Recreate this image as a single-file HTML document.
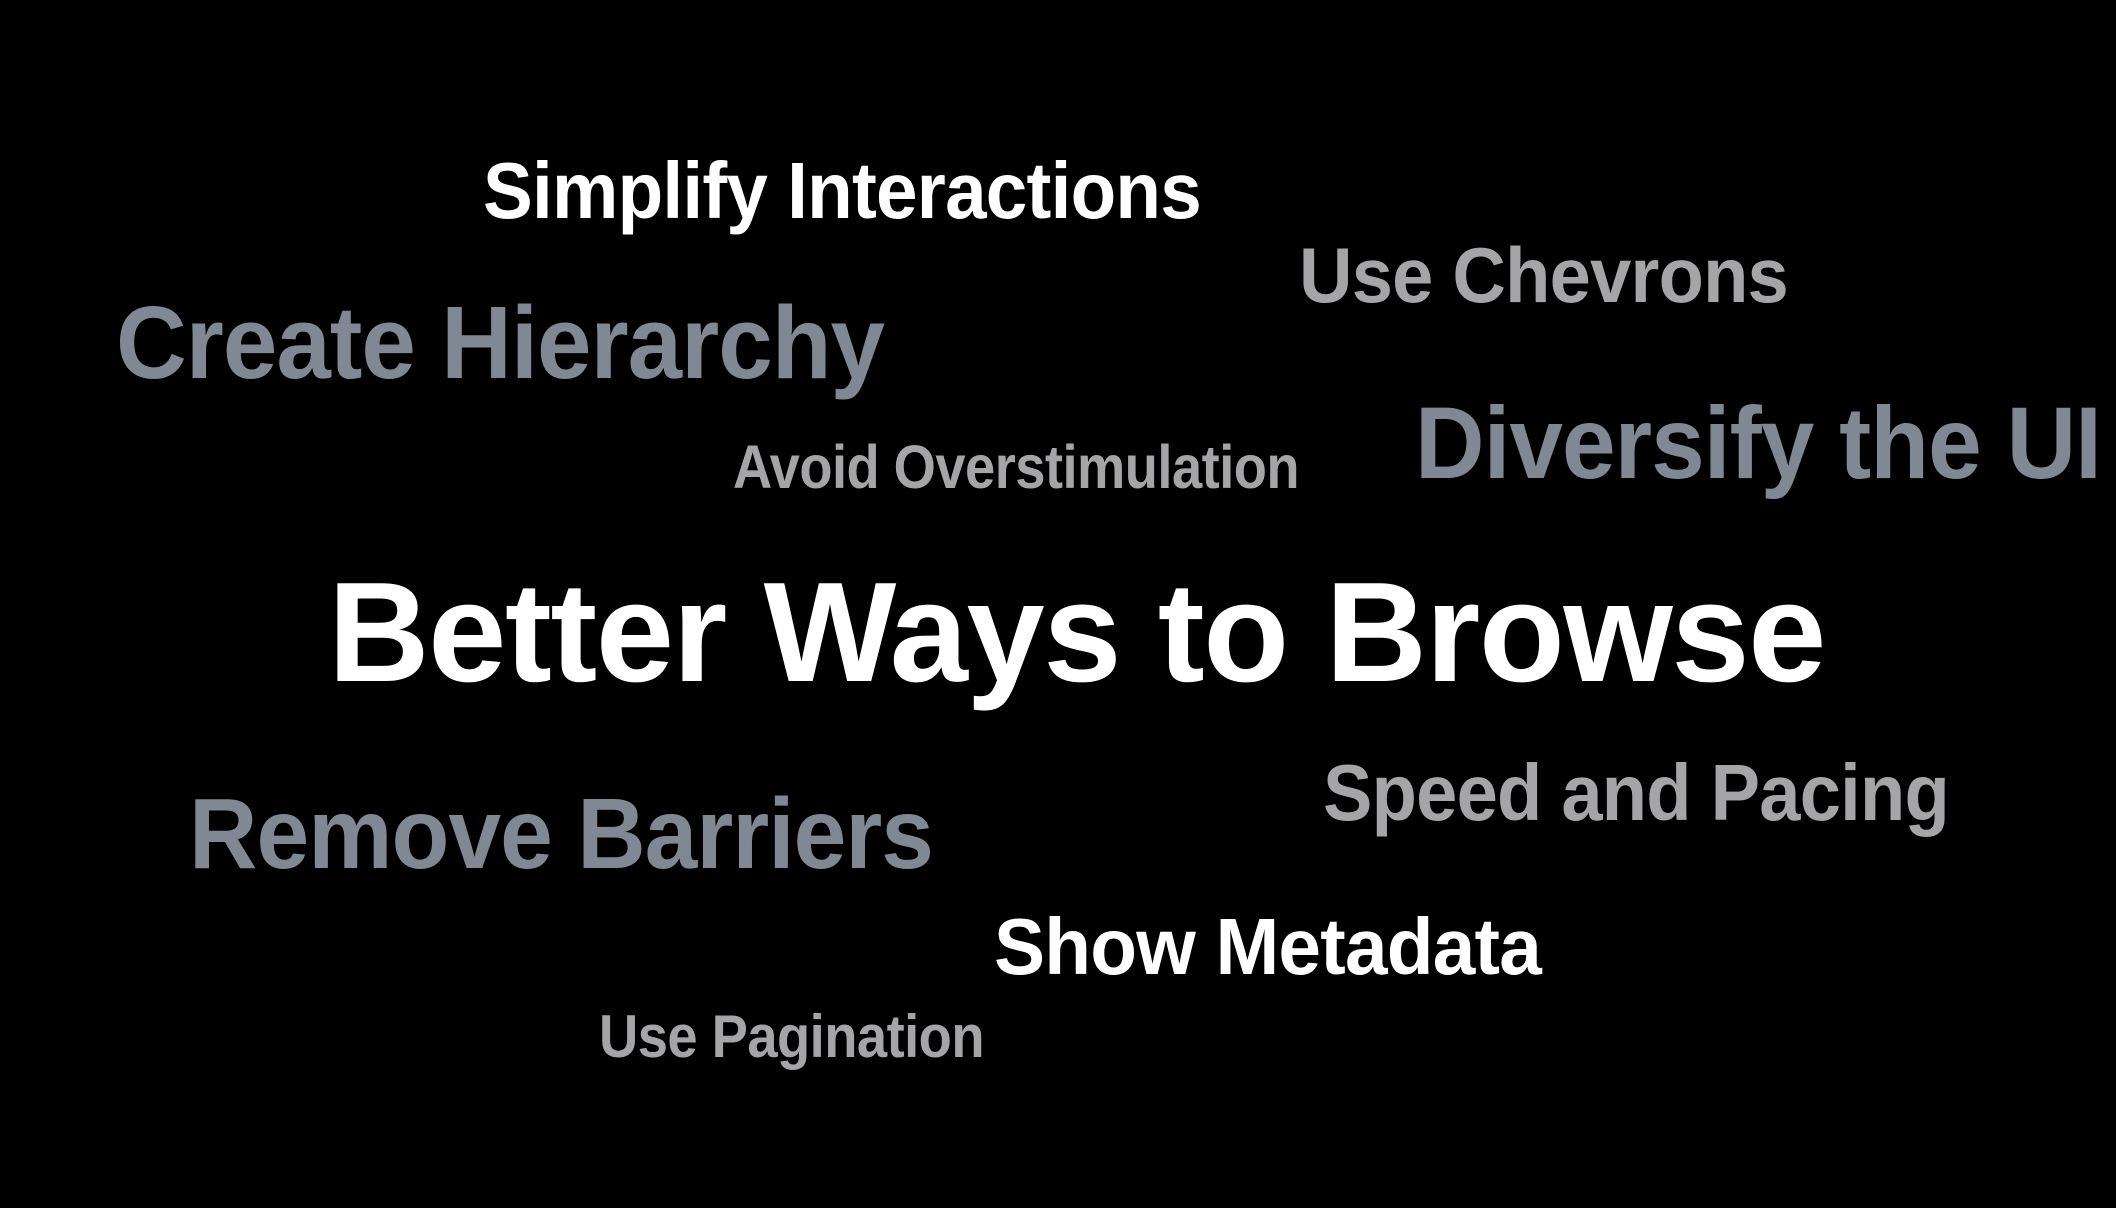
<!DOCTYPE html>
<html><head><meta charset="utf-8"><style>
html,body{margin:0;padding:0;background:#000;width:2116px;height:1208px;overflow:hidden}
.t{position:absolute;white-space:nowrap;font-family:"Liberation Sans",sans-serif;font-weight:bold;line-height:1;transform-origin:0 0;letter-spacing:-0.01em}
.w{color:#fff}.g{color:#a5a5a7}.s{color:#7f8893}
</style></head><body>
<div class="t w" data-w="718" style="left:483px;top:151px;font-size:80px">Simplify Interactions</div>
<div class="t g" data-w="489" style="left:1299px;top:236px;font-size:78px">Use Chevrons</div>
<div class="t s" data-w="768" style="left:116px;top:291px;font-size:103px">Create Hierarchy</div>
<div class="t g" data-w="566" style="left:733px;top:437px;font-size:61px">Avoid Overstimulation</div>
<div class="t s" data-w="686" style="left:1415px;top:392px;font-size:102px">Diversify the UI</div>
<div class="t w" data-w="1497" style="left:328px;top:562px;font-size:142px">Better Ways to Browse</div>
<div class="t g" data-w="626" style="left:1323px;top:753px;font-size:80px">Speed and Pacing</div>
<div class="t s" data-w="744" style="left:189px;top:784px;font-size:100px">Remove Barriers</div>
<div class="t w" data-w="547" style="left:994px;top:907px;font-size:80px">Show Metadata</div>
<div class="t g" data-w="385" style="left:599px;top:1007px;font-size:60px">Use Pagination</div>
<script>
document.querySelectorAll('.t').forEach(function(e){
  var w=e.getBoundingClientRect().width, tw=+e.dataset.w;
  if(w>0) e.style.transform='scaleX('+(tw/w)+')';
});
</script>
</body></html>
